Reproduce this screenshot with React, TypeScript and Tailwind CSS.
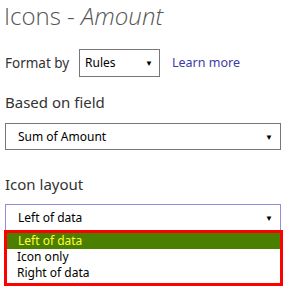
export default function App() {
  const font = { fontFamily: '"Segoe UI", "Noto Sans", "Open Sans", sans-serif' }
  const light = { fontFamily: '"Open Sans", "Noto Sans", sans-serif' }

  return (
    <div className="w-[286px] h-[287px] bg-white text-[#333] overflow-hidden" style={font}>
      {/* Title */}
      <div className="pl-[4px] pt-[1px] h-[40px] text-[24px] font-light leading-[30px] text-[#555]" style={light}>
        Icons - <span className="italic">Amount</span>
      </div>

      {/* Format by */}
      <div className="flex items-center h-[28px] mt-[9px] pl-[5px]">
        <span className="text-[13.5px] w-[74px]">Format by</span>
        <div className="w-[81px] h-[28px] border border-[#777] flex items-center justify-between pl-[5px] pr-[6px] text-[12px] text-black">
          <span>Rules</span>
          <span className="text-[8px]">▼</span>
        </div>
        <span className="ml-[12px] text-[12.5px] text-[#3b3ba6]">Learn more</span>
      </div>

      {/* Based on field */}
      <div className="pl-[5px] mt-[14px] text-[15px] leading-[22px]">Based on field</div>
      <div className="mx-[5px] mt-[10px] w-[276px] h-[27px] border border-[#777] flex items-center justify-between pl-[12px] pr-[7px] text-[12px] text-black">
        <span>Sum of Amount</span>
        <span className="text-[8px]">▼</span>
      </div>

      {/* Icon layout */}
      <div className="pl-[5px] mt-[23px] text-[15px] leading-[22px]">Icon layout</div>
      <div className="relative mx-[5px] mt-[9px] w-[276px]">
        <div className="h-[28px] border border-[#8f8fd9] flex items-center justify-between pl-[12px] pr-[7px] text-[12px] text-black">
          <span>Left of data</span>
          <span className="text-[8px]">▼</span>
        </div>
        <div className="absolute left-[-1px] top-[26px] w-[279px] border-[3px] border-[#ff0000] bg-white text-[12px] pb-[2px]">
          <div className="h-[16px] leading-[16px] bg-[#4a7f00] text-[#ffff33] pl-[11px]">Left of data</div>
          <div className="h-[16px] leading-[16px] text-black pl-[10px]">Icon only</div>
          <div className="h-[16px] leading-[16px] text-black pl-[10px]">Right of data</div>
        </div>
      </div>
    </div>
  )
}
